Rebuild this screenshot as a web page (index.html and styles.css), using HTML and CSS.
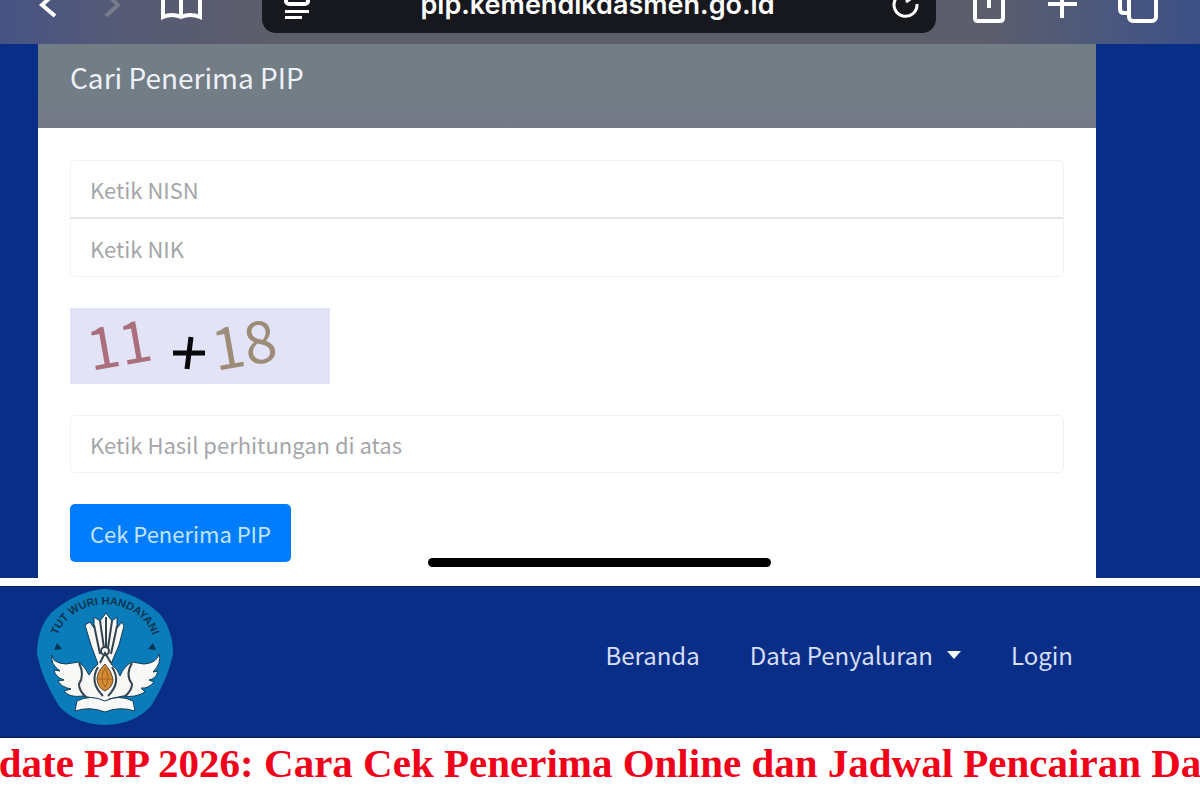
FILE: index.html
```html
<!DOCTYPE html>
<html lang="id">
<head>
<meta charset="utf-8">
<meta name="viewport" content="width=device-width, initial-scale=1">
<title>Cari Penerima PIP</title>
<link rel="stylesheet" href="styles.css">
</head>
<body>
<div class="browser-bar">
  <div class="bar-group bar-left">
    <button class="bar-button narrow" type="button" aria-label="Kembali">
      <svg width="28" height="54" viewBox="0 0 28 54"><path d="M18 15 6 26 19 37" /></svg>
    </button>
    <button class="bar-button narrow dim" type="button" aria-label="Maju">
      <svg width="28" height="54" viewBox="0 0 28 54"><path d="M11 15 22 26 10 37" /></svg>
    </button>
    <button class="bar-button" type="button" aria-label="Penanda">
      <svg width="48" height="54" viewBox="0 0 48 54"><path d="M7 38V16Q16 11 25 16Q34 11 44 16V38Q34 34 25 38Q16 34 7 38ZM25 16V38" /></svg>
    </button>
  </div>
  <div class="address">
    <button class="address-button" type="button" aria-label="Tampilan pembaca">
      <svg width="28" height="54" viewBox="0 0 28 54"><rect x="3" y="14" width="22" height="11" rx="3"/><path class="line" d="M2 32.5H26M2 38.500H19"/></svg>
    </button>
    <input class="address-input" type="text" aria-label="Alamat situs" value="pip.kemendikdasmen.go.id">
    <button class="address-button" type="button" aria-label="Muat ulang">
      <svg width="28" height="54" viewBox="0 0 28 54"><path class="reload" d="M22 18A11.500 11.500 0 1 0 25 25M14 23 21 18 14 12"/></svg>
    </button>
  </div>
  <div class="bar-group bar-right">
    <button class="bar-button" type="button" aria-label="Bagikan">
      <svg width="48" height="54" viewBox="0 0 48 54"><path d="M17 14H13Q10 14 10 17V39Q10 42 13 42H35Q38 42 38 39V17Q38 14 35 14H31M24 29V6M18 11 24 5 30 11"/></svg>
    </button>
    <button class="bar-button" type="button" aria-label="Tab baru">
      <svg width="48" height="54" viewBox="0 0 48 54"><path d="M9 25H38M23 11V39"/></svg>
    </button>
    <button class="bar-button" type="button" aria-label="Semua tab">
      <svg width="48" height="54" viewBox="0 0 48 54"><path d="M15 34H11Q7 34 7 30V13Q7 10 10 10H29Q33 10 33 14"/><rect x="16" y="16" width="27" height="26" rx="4"/></svg>
    </button>
  </div>
</div>

<main class="page">
  <section class="card">
    <h1 class="card-title">Cari Penerima PIP</h1>
    <form class="search-form">
      <div class="field-group">
        <input class="field first" type="text" aria-label="NISN" placeholder="Ketik NISN">
        <input class="field second" type="text" aria-label="NIK" placeholder="Ketik NIK">
      </div>
      <svg class="captcha" width="260" height="76" viewBox="0 0 260 76" role="img" aria-label="11 + 18">
        <text class="digits red" x="21" y="63" transform="rotate(-10 21 63)">11</text>
        <path class="plus" d="M103 45H135M121 29 117 61"/>
        <text class="digits tan" x="146" y="63" transform="rotate(-10 146 63)">18</text>
      </svg>
      <input class="field" type="text" aria-label="Hasil perhitungan" placeholder="Ketik Hasil perhitungan di atas">
      <button class="submit" type="button">Cek Penerima PIP</button>
    </form>
  </section>
  <div class="home-indicator"></div>
</main>

<header class="site-nav">
  <a class="logo" href="#" aria-label="Tut Wuri Handayani">
    <svg width="138" height="138" viewBox="0 0 138 138">
      <path class="badge" d="M69 1Q98 3 123 25Q137 41 137 66Q132 91 115 118Q99 136 69 137Q39 136 23 118Q6 91 1 66Q1 41 15 25Q40 3 69 1Z"/>
      <path id="motto-arc" d="M19 57C27 3 111 3 119 57" fill="none"/>
      <text class="motto"><textPath href="#motto-arc" startOffset="50%" text-anchor="middle">TUT WURI HANDAYANI</textPath></text>
      <path class="ink" d="M21 55 18 62 26 61ZM117 55 120 62 112 61Z"/>
      <path class="wing" d="M16 67Q16 75 30 76L43 74Q50 80 53 87Q57 80 62 76L55 57 49 37 54 34 58 40 58 29 64 33 70 25 76 33 81 29 81 40 86 34 88 38 83 57 75 76Q82 81 84 88Q88 78 96 74L108 76Q121 75 123 66Q126 75 117 84L122 83Q120 91 113 92L118 94Q112 101 105 100L109 104Q99 110 87 108L73 111 68 117 62 111 47 108Q33 110 28 103L35 101Q25 99 22 93L28 92Q19 89 18 82L24 83Q14 76 16 67Z"/>
      <path class="feather" d="M58 37 64 66M64 33 68 60M70 29V60M76 33 72 60M81 38 75 66M43 75Q49 87 43 96Q43 103 50 109M96 75Q89 87 96 96Q96 103 88 109M64 75 69 65 75 75M62 79Q53 94 67 108M76 79Q86 94 72 108"/>
      <circle class="feather" cx="69" cy="63" r="4"/>
      <path class="flame" d="M69 76Q61 84 61 91Q62 100 69 103Q77 99 77 91Q76 84 69 76Z"/>
      <path class="flame-line" d="M69 80Q63 90 69 99Q75 90 69 80M62 91H76"/>
      <path class="wing" d="M41 113Q54 106 69 113Q83 106 97 113L99 123Q83 118 69 124Q54 118 39 123Z"/>
    </svg>
  </a>
  <nav class="menu">
    <a class="menu-link" href="#">Beranda</a>
    <a class="menu-link" href="#">Data Penyaluran <span class="caret"></span></a>
    <a class="menu-link" href="#">Login</a>
  </nav>
</header>

<footer class="headline"><p class="headline-text">date PIP 2026: Cara Cek Penerima Online dan Jadwal Pencairan Da</p></footer>
</body>
</html>
```
FILE: styles.css
```css
* {
  box-sizing: border-box;
}

body {
  margin: 0;
  min-height: 100vh;
  display: flex;
  flex-direction: column;
  background: #fff;
  font-family: "Noto Sans CJK JP", "Noto Sans", sans-serif;
  overflow-x: hidden;
}

button,
input {
  font: inherit;
  margin: 0;
  border: 0;
  padding: 0;
  background: none;
  color: inherit;
}

svg {
  display: block;
}

.browser-bar {
  height: 44px;
  padding-bottom: 11px;
  display: flex;
  align-items: flex-end;
  overflow: hidden;
  color: #fff;
  background: linear-gradient(90deg, #465384 0, #555a76 10%, #5c5e6b 22%, #5c5e6b 82%, #49577f 93%, #3d5086 100%);
}

.bar-group {
  display: flex;
}

.bar-left {
  padding: 0 58px 0 36px;
  gap: 32px;
}

.bar-right {
  padding: 0 39px 0 29px;
  gap: 26px;
}

.bar-button {
  width: 48px;
  height: 54px;
}

.bar-button.narrow {
  width: 28px;
}

.bar-button svg,
.address-button svg {
  fill: none;
  stroke: currentColor;
  stroke-width: 4;
}

.dim {
  color: #777b8c;
}

.address {
  flex: 1;
  min-width: 0;
  height: 54px;
  padding: 0 16px 0 21px;
  display: flex;
  border-radius: 14px;
  background: #17181e;
}

.address-input {
  flex: 1;
  min-width: 0;
  height: 52px;
  padding: 0 8px 0 0;
  font: 600 27px/52px Inter, sans-serif;
  text-align: center;
}

.address-button .line {
  stroke-width: 3;
}

.address-button .reload {
  stroke-width: 3;
}

.page {
  position: relative;
  padding: 0 104px 0 38px;
  background: #092e87;
}

.card {
  background: #fff;
}

.card-title {
  margin: 0;
  padding: 13px 32px 31px;
  font-size: 28px;
  line-height: 40px;
  font-weight: 400;
  color: #eef1f8;
  background: linear-gradient(#727d86 60%, #747986);
}

.search-form {
  padding: 32px 32px 16px;
  display: flex;
  flex-direction: column;
  align-items: flex-start;
  gap: 31px;
}

.field-group {
  width: 100%;
}

.field {
  display: block;
  width: 100%;
  height: 58px;
  padding: 0 19px;
  border: 1px solid #f1f2f4;
  border-radius: 5px;
  font-size: 22px;
  color: #555;
}

.field.first {
  height: 59px;
  border-bottom: 2px solid #e3e4e6;
  border-radius: 5px 5px 0 0;
}

.field.second {
  border-top: 0;
  border-radius: 0 0 5px 5px;
}

.field::placeholder {
  color: #a5a6a9;
  opacity: 1;
}

.captcha {
  overflow: visible;
  background: #e3e3f7;
}

.digits {
  font-family: "Noto Sans CJK JP", "Noto Sans", sans-serif;
  font-size: 58px;
}

.red {
  fill: #aa6f7c;
}

.tan {
  fill: #9c8c78;
}

.plus {
  fill: none;
  stroke: #08080c;
  stroke-width: 5;
}

.submit {
  height: 58px;
  padding: 0 20px;
  border-radius: 5px;
  font-size: 22px;
  color: #c3e4ff;
  background: #007dfc;
}

.home-indicator {
  position: absolute;
  left: 50%;
  bottom: 11px;
  width: 343px;
  height: 9px;
  margin-left: -172px;
  border-radius: 5px;
  background: #000;
}

.site-nav {
  margin-top: 8px;
  padding: 1px 127px 10px 36px;
  display: flex;
  align-items: center;
  justify-content: space-between;
  background: #092e87;
  border-top: 1px solid #061f66;
  border-bottom: 2px solid #0a2569;
}

.menu {
  padding-bottom: 5px;
  display: flex;
  gap: 50px;
}

.menu-link {
  display: flex;
  align-items: center;
  gap: 14px;
  font-size: 24px;
  line-height: 36px;
  white-space: nowrap;
  text-decoration: none;
  color: #d5defa;
}

.caret {
  border: 7px solid transparent;
  border-top: 8px solid #f2f8ff;
  border-bottom: 0;
}

.badge {
  fill: #0b7cba;
}

.motto {
  font: bold 11px "Liberation Sans", sans-serif;
  fill: #063451;
}

.ink {
  fill: #063451;
}

.wing {
  fill: #f8f8f6;
  stroke: #123c56;
  stroke-width: 1;
}

.feather {
  fill: none;
  stroke: #33434f;
  stroke-width: 2;
}

.flame {
  fill: #d28c36;
  stroke: #5e452d;
}

.flame-line {
  fill: none;
  stroke: #a8631c;
}

.headline {
  flex: 1;
  display: flex;
  justify-content: center;
  overflow: hidden;
}

.headline-text {
  margin: 0;
  padding: 4px 0 14px;
  font: bold 41px/42px "Liberation Serif", serif;
  white-space: nowrap;
  color: #f00019;
}
```
